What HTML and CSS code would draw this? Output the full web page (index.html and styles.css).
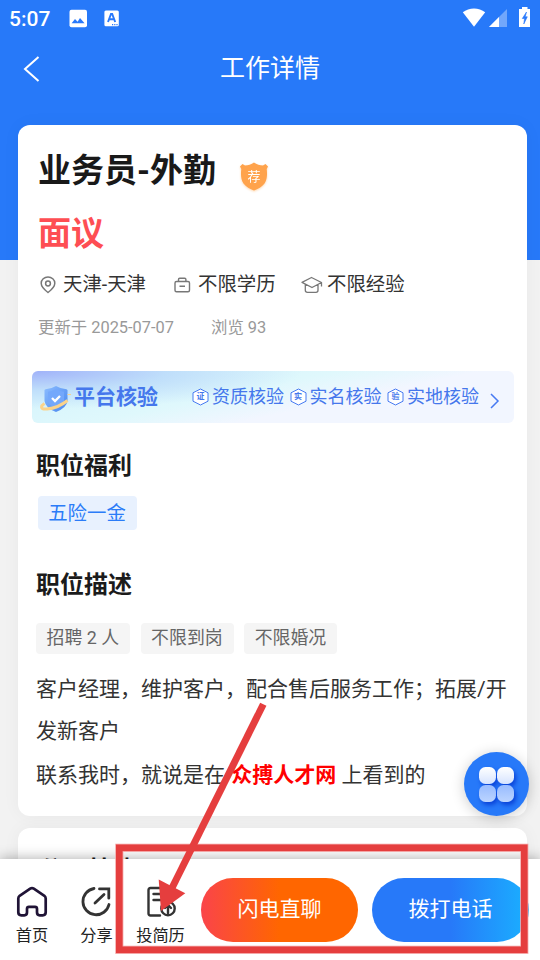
FILE: index.html
```html
<!DOCTYPE html>
<html lang="zh-CN">
<head>
<meta charset="utf-8">
<title>工作详情</title>
<link rel="stylesheet" href="styles.css">
</head>
<body>
<div class="phone">
  <div class="status">
    <span class="clock">5:07</span>
    <svg class="st-photo" width="19" height="19" viewBox="0 0 19 19"><rect x=".5" y=".7" width="17.5" height="17.5" rx="2" fill="#fff"/><path d="M2.600 14.300l3.400-4.400 2.600 2.800L11 9l4.600 5.300z" fill="#2979fb"/></svg>
    <svg class="st-a" width="16" height="17" viewBox="0 0 16 17"><rect x=".4" y=".4" width="14.4" height="15.8" rx="1.5" fill="#fff"/><path d="M4 12l3-8h1.200l3 8M5.200 9.300h4.800" fill="none" stroke="#2979fb" stroke-width="1.900"/><path d="M8 14.600h6" stroke="#2979fb" stroke-width="1.200" stroke-dasharray="1.200 1"/></svg>
    <span class="grow"></span>
    <svg class="st-wifi" width="24" height="20" viewBox="0 0 24 20"><path d="M.8 4.300C7-.9 17-.9 23.200 4.300L12 18.800z" fill="#fff"/></svg>
    <svg class="st-cell" width="18" height="18" viewBox="0 0 18 18"><path d="M18 0v18H0z" fill="#fff" opacity=".35"/><path d="M10 8v10H0z" fill="#fff"/></svg>
    <svg class="st-bat" width="12" height="20" viewBox="0 0 12 20"><path d="M3 0h5.500v2H11v18H0V2h3z" fill="#fff"/><path d="M7.500 5L3.300 11.500h2.200L4.800 17 8.300 9.800H6.200z" fill="#2979fb" stroke="#2979fb" stroke-width=".6"/></svg>
  </div>
  <div class="nav">
    <svg class="back" width="20" height="28" viewBox="0 0 20 28"><path d="M15.500 2L2 14l13.500 12" fill="none" stroke="#fff" stroke-width="2"/></svg>
    <h1 class="nav-title">工作详情</h1>
  </div>

  <main class="scroll">
    <section class="card">
      <div class="title-row">
        <h2 class="title">业务员-外勤</h2>
        <span class="shield"><svg width="30" height="31" viewBox="0 0 30 31"><path d="M15 1.500C17.500 3.500 21 4.500 24 4.500l2.500-1.500 2.500 2.500-1.300 2.500c.5 4 .8 10-2.200 14.500-2.500 3.500-6.500 5.500-10.500 7-4-1.500-8-3.500-10.500-7C1.500 18 1.800 12 2.300 8L1 5.500 3.500 3 6 4.500c3 0 6.500-1 9-3z" fill="#ffa34c"/></svg><b class="shield-text">荐</b></span>
      </div>
      <div class="salary">面议</div>
      <div class="meta">
        <svg width="16" height="18" viewBox="0 0 16 18" fill="none" stroke="#777" stroke-width="1.500"><path d="M8 16.500C3.500 13 1.200 10.500 1.200 7.200a6.800 6.300 0 0 1 13.600 0C14.800 10.500 12.500 13 8 16.500z"/><circle cx="8" cy="7.500" r="2.400"/></svg>
        <span class="m1">天津-天津</span>
        <svg width="18" height="18" viewBox="0 0 18 18" fill="none" stroke="#777" stroke-width="1.400"><rect x="2" y="5.500" width="14.500" height="10.300" rx="1.500"/><path d="M5.500 5.300V3.500Q5.500 2.300 6.700 2.300h5q1.200 0 1.200 1.200v1.800M6.500 10.300h5.500"/></svg>
        <span class="m2">不限学历</span>
        <svg width="22" height="18" viewBox="0 0 22 18" fill="none" stroke="#777" stroke-width="1.300" stroke-linejoin="round"><path d="M1 6.300L10.500 1.500l10 5L11 11.500zM4.300 8.300v6q0 2 2.200 2h8.500q2 0 2-2V8.500M20.500 6.500v4"/></svg>
        <span class="m3">不限经验</span>
      </div>
      <div class="update"><span>更新于 2025-07-07</span><span>浏览 93</span></div>

      <div class="verify">
        <svg class="v-logo" width="32" height="28" viewBox="0 0 32 28">
          <defs><linearGradient id="sh" x1="0" y1="0" x2="1" y2="1"><stop offset="0" stop-color="#8cbcff"/><stop offset="1" stop-color="#4787ef"/></linearGradient></defs>
          <path d="M16 1q5 3 10.500 3.300l1 .7v11q-1 7-11.500 11-10.500-4-11.500-11V5l1-.7Q11 4 16 1z" fill="url(#sh)"/>
          <path d="M16 4q4 2.500 8 2.800v9q-1 5-8 8-7-3-8-8v-9Q12 6.500 16 4z" fill="#74a8fb"/>
          <path d="M12 13l3 3 5-5" fill="none" stroke="#fff" stroke-width="2.300"/>
          <path d="M4.500 18.500C.5 21 0 24.500 7 24 15 23.300 22 20 27.500 15.500" fill="none" stroke="#fbd38b" stroke-width="3"/>
          <path d="M27.500 9.500l3.500 0" stroke="#fbd38b"/>
        </svg>
        <strong class="v-title">平台核验</strong>
        <span class="v-item"><span class="hex"><svg width="17" height="18" viewBox="0 0 17 18"><path d="M8.500 1l7.500 3.800v8.400l-7.500 3.800-7.500-3.800V4.800z" fill="#fff" stroke="#477af2" stroke-width="1"/></svg><i class="hex-t">证</i></span>资质核验</span>
        <span class="v-item"><span class="hex"><svg width="17" height="18" viewBox="0 0 17 18"><path d="M8.500 1l7.500 3.800v8.400l-7.500 3.800-7.500-3.800V4.800z" fill="#fff" stroke="#477af2" stroke-width="1"/></svg><i class="hex-t">实</i></span>实名核验</span>
        <span class="v-item"><span class="hex"><svg width="17" height="18" viewBox="0 0 17 18"><path d="M8.500 1l7.500 3.800v8.400l-7.500 3.800-7.500-3.800V4.800z" fill="#fff" stroke="#477af2" stroke-width="1"/></svg><i class="hex-t">验</i></span>实地核验</span>
        <svg class="v-arrow" width="10" height="16" viewBox="0 0 10 16"><path d="M1 1l7 7-7 7" fill="none" stroke="#477af2" stroke-width="1.500"/></svg>
      </div>

      <h3 class="heading">职位福利</h3>
      <div class="benefit">五险一金</div>
      <h3 class="heading second">职位描述</h3>
      <div class="tags"><span class="tag">招聘 2 人</span><span class="tag">不限到岗</span><span class="tag">不限婚况</span></div>
      <p class="desc">客户经理，维护客户，配合售后服务工作；拓展/开发新客户</p>
      <p class="desc contact">联系我时，就说是在 <b class="site">众搏人才网</b> 上看到的</p>
    </section>
    <section class="card next"><h3 class="heading">公司其他</h3></section>
  </main>

  <footer class="bar">
    <div class="tab home">
      <svg width="32" height="32" viewBox="0 0 32 32" fill="none" stroke="#201436" stroke-width="2.700" stroke-linejoin="round"><path d="M2.300 12.500q0-1.700 1.300-2.700L14.200 2.700q1.800-1.200 3.600 0l10.600 7.100q1.300 1 1.300 2.700v13.800q0 3-3 3h-3q-2.700 0-2.700-3v-3.500q0-2-2-2h-6q-2 0-2 2v3.500q0 3-2.700 3h-3q-3 0-3-3z"/></svg>
      <span>首页</span>
    </div>
    <div class="tab share">
      <svg width="32" height="32" viewBox="0 0 32 32" fill="none" stroke="#333" stroke-width="2.800" stroke-linecap="round"><path d="M13 2.500A13.200 13.200 0 1 0 28 18.500M14 17l9-8.500M18.500 2.900h9.300v9.300"/></svg>
      <span>分享</span>
    </div>
    <div class="tab resume">
      <svg width="32" height="32" viewBox="0 0 32 32" fill="none" stroke="#333" stroke-width="2.400" stroke-linecap="round"><path d="M15 29.500H5.500q-2 0-2-2V4q0-2 2-2h16q2 0 2 2v11M8.500 8h11M8.500 14h7"/><circle cx="23" cy="22.500" r="6.700" fill="#fff"/><path d="M23 27v-7.500M20 22l3-3 3 3"/></svg>
      <span>投简历</span>
    </div>
    <div class="btn chat">闪电直聊</div>
    <div class="btn call">拨打电话</div>
  </footer>

  <div class="fab">
    <i class="dot"></i><i class="dot"></i><i class="dot low"></i><i class="dot low"></i>
  </div>

  <svg class="marks" width="540" height="960" viewBox="0 0 540 960">
    <rect x="119.300" y="847.800" width="405" height="102" fill="none" stroke="#f5aaaa" stroke-width="8.200"/>
    <rect x="119.300" y="847.800" width="405" height="102" fill="none" stroke="#e53e3e" stroke-width="6.600"/>
    <path d="M263.300 704.300L171 890" stroke="#e53e3e" stroke-width="7"/>
    <path d="M158.700 879.500l26.600 13.800L161 911z" fill="#e53e3e"/>
  </svg>
</div>
</body>
</html>
```
FILE: styles.css
```css
* { box-sizing: border-box; }
body, h1, h2, h3, p { margin: 0; }
body {
  font-family: Roboto, "Noto Sans CJK SC", sans-serif;
  color: #333;
}
svg { display: block; flex: none; }
i { font-style: normal; }

.phone {
  position: relative;
  display: flex;
  flex-direction: column;
  width: 540px;
  height: 960px;
  overflow: hidden;
  background: linear-gradient(#2779f9 260px, #f2f2f2 260px);
}

.status {
  display: flex;
  align-items: center;
  height: 37px;
  padding: 0 9px;
  color: #fff;
}
.clock { width: 60px; font-size: 21px; font-weight: 500; line-height: 37px; padding-top: 1px; }
.st-a { margin-left: 16px; }
.grow { flex: 1; }
.st-wifi { margin-right: 3px; margin-top: -2px; }
.st-cell { margin-right: 12px; margin-top: -1px; }
.st-bat { margin-top: -3px; }

.nav { display: flex; align-items: center; height: 63px; padding-left: 23px; color: #fff; }
.nav-title { flex: 1; margin-right: 43px; text-align: center; font-size: 25px; font-weight: 400; line-height: 63px; }

.scroll { flex: 1; min-height: 0; overflow: hidden; padding: 25px 13px 0 18px; }
.card {
  height: 691px;
  padding: 26px 13px 0 14px;
  border-radius: 12px;
  background: #fff;
  box-shadow: 0 0 18px rgba(0, 0, 0, .045);
}
.title-row { display: flex; align-items: flex-start; padding-left: 6px; }
.title { font-size: 33px; font-weight: 700; line-height: 40px; color: #191919; white-space: nowrap; }
.shield { position: relative; margin: 10px 0 0 23px; height: 30px; filter: drop-shadow(0 1px 1px #ffd9b2); }
.shield-text { position: absolute; inset: 0; text-align: center; color: #fff; font-size: 13px; font-weight: 400; line-height: 32px; }
.salary { margin: 23px 0 0 6px; font-size: 33px; font-weight: 700; line-height: 40px; color: #fe4e53; }
.meta { display: flex; align-items: center; height: 26px; margin-top: 18px; padding-left: 8px; font-size: 19.4px; line-height: 26px; white-space: nowrap; }
.m1 { width: 117px; padding-left: 7px; }
.m2 { width: 110px; padding-left: 7px; }
.m3 { padding-left: 4px; }
.update { display: flex; gap: 37px; margin-top: 19px; padding-left: 6px; font-size: 16.4px; line-height: 22px; color: #999; }

.verify {
  display: flex;
  align-items: center;
  height: 52px;
  margin-top: 32px;
  padding-left: 8px;
  border-radius: 6px;
  background: radial-gradient(ellipse 270px 38px at 0 0, #a0b2f9, rgba(178, 210, 250, .65) 50%, rgba(222, 248, 252, 0)), linear-gradient(168deg, #d8f5fc 20%, #dff8fc 42%, #f2f6ff 62%);
  color: #4577ec;
  white-space: nowrap;
}
.v-logo { margin-top: 4px; }
.v-title { width: 120px; padding-left: 2px; font-size: 21px; line-height: 56px; }
.v-item { display: flex; align-items: center; gap: 3px; width: 97.5px; font-size: 18px; line-height: 56px; }
.hex { position: relative; margin-top: -1px; }
.hex-t { position: absolute; inset: 0; font-size: 8px; font-weight: 700; line-height: 18px; text-align: center; }
.v-arrow { margin-top: 7px; margin-left: 5px; }

.heading { margin: 28px 0 0 4px; font-size: 24px; font-weight: 700; line-height: 30px; color: #1b1b1b; }
.benefit { width: 99px; height: 34px; margin: 15px 0 0 6px; border-radius: 4px; background: #e8f1fe; color: #2b7cf8; text-align: center; font-size: 19.4px; line-height: 35px; padding-right: 1px; }
.second { margin-top: 40px; }
.tags { display: flex; gap: 10.500px; margin: 23px 0 0 4px; }
.tag { height: 31px; padding: 0 11px 0 10.500px; border-radius: 4px; background: #f5f5f5; color: #666; font-size: 17.9px; line-height: 29px; }
.desc { width: 480px; margin: 14px 0 0 4px; font-size: 21px; line-height: 42px; }
.contact { margin-top: 2px; }
.site { margin-left: 1px; color: #f00; }
.next { margin-top: 12px; padding-top: 27px; }
.next .heading { margin: 0 0 0 7px; }

.bar {
  position: relative;
  display: flex;
  height: 101px;
  background: #fff;
  box-shadow: 0 -1px 12px rgba(0, 0, 0, .3);
}
.tab { display: flex; flex-direction: column; align-items: center; padding-top: 27px; font-size: 16.2px; line-height: 22px; gap: 7px; color: #222; white-space: nowrap; }
.home { width: 64px; }
.share { width: 65px; }
.resume { width: 63px; }
.btn { flex: none; width: 157px; height: 64px; margin-top: 19px; border-radius: 32px; color: #fff; text-align: center; font-size: 21px; line-height: 62px; }
.chat { margin-left: 9px; background: linear-gradient(90deg, #fa444a, #ff6600 50%); }
.call { margin-left: 14px; background: linear-gradient(90deg, #2779f9 50%, #1ab0ff); }

.fab {
  position: absolute;
  left: 464px;
  top: 752px;
  display: grid;
  grid-template-columns: 17px 17px;
  grid-auto-rows: 17px;
  gap: 1px;
  place-content: center;
  padding-right: 1px;
  width: 65px;
  height: 64px;
  border-radius: 50%;
  background: #2779f9;
  box-shadow: 0 2px 14px rgba(0, 0, 0, .2);
}
.dot { border-radius: 6.500px; background: linear-gradient(#fff, #d6e4ff); box-shadow: 2px 3px 4px #0b43d8; }
.low { background: linear-gradient(#98bcff, #bcd4ff); }
.marks { position: absolute; left: 0; top: 0; }
```
